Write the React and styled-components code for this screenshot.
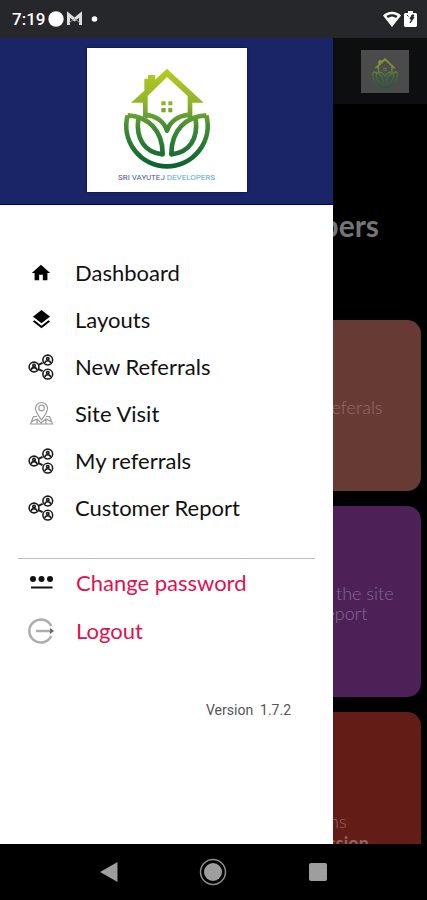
import styled, { createGlobalStyle } from "styled-components";
import { MdHome, MdLayers } from "react-icons/md";

const GlobalStyle = createGlobalStyle`
  * {
    box-sizing: border-box;
  }
  body {
    margin: 0;
    background: #000;
    font-family: Lato, "Open Sans", sans-serif;
  }
`;

const Screen = styled.div`
  display: flex;
  flex-direction: column;
  height: 100vh;
  overflow: hidden;
`;

// status bar
const StatusBar = styled.header`
  display: flex;
  flex: none;
  align-items: center;
  justify-content: space-between;
  height: 38px;
  padding: 0 10px 0 12px;
  background: #26272b;
  color: #fff;
`;
const StatusGroup = styled.div`
  display: flex;
  align-items: center;
  gap: 3px;
`;
const Clock = styled.time`
  font: 500 17px/20px Roboto, sans-serif;
`;

// page behind the drawer
const Stage = styled.div`
  position: relative;
  flex: 1;
  min-height: 0;
  overflow: hidden;
`;
const AppBar = styled.div`
  display: flex;
  justify-content: flex-end;
  align-items: center;
  height: 66px;
  padding: 0 18px;
  background: #0c0e0f;
`;
const Thumb = styled.div`
  display: flex;
  width: 48px;
  height: 43px;
  background: #4b4b4b;
  svg {
    opacity: 0.6;
  }
`;
const PageTitle = styled.h1`
  margin: 0;
  padding: 103px 48px 77px 0;
  color: #757575;
  font-size: 30px;
  line-height: 36px;
  font-weight: 700;
  text-align: right;
  white-space: nowrap;
`;
const Cards = styled.div`
  display: flex;
  flex-direction: column;
  align-items: flex-end;
  gap: 15px;
  padding-right: 6px;
`;
const Card = styled.section`
  display: flex;
  flex-direction: column;
  justify-content: center;
  width: 48%;
  height: ${(p) => p.$height}px;
  padding-top: 2px;
  border-radius: 14px;
  background: ${(p) => p.$color};
  color: ${(p) => p.$text};
  font-size: 18px;
  line-height: 20px;
  font-weight: 300;
  text-align: center;
  p {
    margin: 0;
  }
  strong {
    line-height: 24px;
    font-weight: 700;
  }
`;

// drawer
const Drawer = styled.aside`
  position: absolute;
  top: 0;
  bottom: 0;
  left: 0;
  width: 78%;
  background: #fff;
`;
const Brand = styled.div`
  display: flex;
  justify-content: center;
  padding: 10px 0 12px;
  background: #1a2568;
  border-bottom: 1px solid #00005a;
`;
const LogoBox = styled.div`
  width: 160px;
  height: 144px;
  background: #fff;
  box-shadow: 0 0 2px #00005a;
`;
const LogoName = styled.div`
  color: #4a5793;
  font: 400 8px/12px Roboto, sans-serif;
  text-align: center;
  span {
    color: #55aecb;
  }
`;
const Menu = styled.nav`
  padding-top: 44px;
`;
const MenuLink = styled.a`
  display: flex;
  align-items: center;
  gap: 21px;
  height: 47px;
  padding-left: 28px;
  color: #111;
  font-size: 22px;
  line-height: 26px;
  text-decoration: none;
`;
const IconSlot = styled.span`
  display: flex;
  justify-content: center;
  width: 26px;
`;
const Divider = styled.hr`
  margin: 27px 18px 0;
  border: 0;
  border-top: 1px solid #bdbdbd;
`;
const ActionButton = styled.button`
  display: flex;
  align-items: center;
  gap: 22px;
  width: 100%;
  height: 48px;
  padding: 0 0 0 28px;
  border: 0;
  background: none;
  color: #e0114f;
  font-family: inherit;
  font-size: 22px;
  line-height: 26px;
`;
const Version = styled.p`
  margin: 45px 42px 0;
  color: #555;
  font: 400 14px/20px Roboto, sans-serif;
  text-align: right;
  white-space: pre;
`;

// system navigation
const NavBar = styled.footer`
  display: grid;
  grid-template-columns: repeat(3, 1fr);
  flex: none;
  height: 56px;
  padding: 0 57px;
  background: #000;
`;
const NavButton = styled.button`
  display: flex;
  align-items: center;
  justify-content: center;
  padding: 0;
  border: 0;
  background: none;
`;

const Logo = ({ id, width, height }) => (
  <svg width={width} height={height} viewBox="20 24 480 363" fill="none">
    <defs>
      <linearGradient id={id} gradientUnits="userSpaceOnUse" x1="0" y1="86" x2="0" y2="384">
        <stop offset="0" stopColor="#b9cc1f" />
        <stop offset="0.35" stopColor="#8fb32b" />
        <stop offset="0.6" stopColor="#3f8a35" />
        <stop offset="1" stopColor="#07622f" />
      </linearGradient>
    </defs>
    <path
      fill={`url(#${id})`}
      d="M152 188 192 152V116h11v-11h21v14L260 86l110 102h-34v42l-14 6v-68l-62-57-58 57v68l-14-6v-42ZM243 184h13v12h-13ZM264 184h12v12h-12ZM243 204h13v13h-13ZM264 204h12v13h-12Z"
    />
    <g stroke={`url(#${id})`} strokeWidth="14" strokeLinejoin="round">
      <path d="M142 226A122 122 0 1 0 378 226" />
      <path d="M142 226C200 228 248 270 247 343C192 338 166 296 174 235" />
      <path d="M378 226C320 228 272 270 273 343C328 338 354 296 346 235" />
      <path d="M194 224c34 4 58 22 66 48 8-26 32-44 66-48" />
    </g>
  </svg>
);

const ShareIcon = () => (
  <svg width="26" height="26" viewBox="0 0 25 25" fill="none" stroke="#1c1c1c" strokeWidth="1.5">
    <path d="m10 10.500 4-2M10 14.500l4 2" strokeWidth="2" />
    {[
      [19, 5.8],
      [5.8, 12.5],
      [19, 19.4],
    ].map(([x, y]) => (
      <g key={y} transform={`translate(${x} ${y})`}>
        <circle r="4.7" />
        <circle cy="-1.3" r="1.2" />
        <path d="M-2.800 3c.3-3.200 5.300-3.200 5.600 0" />
      </g>
    ))}
  </svg>
);

const SiteIcon = () => (
  <svg width="25" height="25" viewBox="0 0 25 25" fill="none" stroke="#9c9c9c" strokeWidth="1.200">
    <path d="M12.500 19C9 14 6.500 11 6.500 7.500a6 6 0 0 1 12 0C18.500 11 16 14 12.500 19Z" />
    <circle cx="12.500" cy="7" r="2.800" />
    <path d="M8 15.500H4.500L1.500 23h22l-3-7.500H17M2 21l6-3 4 4 5-4 6 3M8 18v5M17 18v5" />
  </svg>
);

const PasswordIcon = () => (
  <svg width="24" height="16" viewBox="0 0 24 16" fill="#111">
    <circle cx="4" cy="4" r="3" />
    <circle cx="12.500" cy="4" r="3" />
    <circle cx="21" cy="4" r="3" />
    <path d="M2 11.500h21.500v2H2Z" />
  </svg>
);

const LogoutIcon = () => (
  <svg width="26" height="26" viewBox="0 0 26 26" fill="none" stroke="#adadad" strokeWidth="2.500">
    <path d="M23.200 8a11.500 11.500 0 1 0 0 10" />
    <path d="M8 13h15" />
    <path d="m22 10 4 3-4 3Z" fill="#666" stroke="none" />
  </svg>
);

const links = [
  { label: "Dashboard", icon: <MdHome size={22} color="#000" /> },
  { label: "Layouts", icon: <MdLayers size={23} color="#000" /> },
  { label: "New Referrals", icon: <ShareIcon /> },
  { label: "Site Visit", icon: <SiteIcon /> },
  { label: "My referrals", icon: <ShareIcon /> },
  { label: "Customer Report", icon: <ShareIcon /> },
];

const App = () => {
  return (
    <Screen>
      <GlobalStyle />
      <StatusBar>
        <StatusGroup>
          <Clock>7:19</Clock>
          <svg width="52" height="18" viewBox="0 0 52 18" fill="none">
            <circle cx="8" cy="9" r="7.700" fill="#fff" />
            <path d="M20.500 15V4.500l6 5 6-5V15" stroke="#ddd" strokeWidth="3" />
            <path d="m21 13 5.500-4.500L32 13" stroke="#999" />
            <circle cx="46.500" cy="9" r="2.800" fill="#fff" />
          </svg>
        </StatusGroup>
        <StatusGroup>
          <svg width="18" height="16" viewBox="0 0 18 16">
            <path d="M0 4.500C5-.5 13-.5 18 4.500L9 16Z" fill="#fff" />
            <path d="M3.500 5c3.500-2.500 7.500-2.500 11 0l-1.500 2c-2.500-2-5.500-2-8 0Z" fill="#26272b" />
          </svg>
          <svg width="13" height="16" viewBox="0 0 13 16">
            <path d="M1 2h3V0h5v2h3l1 1v12l-1 1H1l-1-1V3Z" fill="#fff" />
            <path d="m3 4 1.500 1.500M8 4 6 8h2l-2 4 4-5.500H8.500L10 4Z" fill="#26272b" stroke="#26272b" />
          </svg>
        </StatusGroup>
      </StatusBar>

      <Stage>
        <AppBar>
          <Thumb>
            <Logo id="thumbFill" width={48} height={40} />
          </Thumb>
        </AppBar>
        <PageTitle>Sri Vayutej Developers</PageTitle>
        <Cards>
          <Card $height={171} $color="#683a34" $text="#8f6f6a">
            <p>All your Referals</p>
          </Card>
          <Card $height={191} $color="#4d2158" $text="#866890">
            <p>
              Please visit the site
              <br />
              and a report
            </p>
          </Card>
          <Card $height={240} $color="#641c17" $text="#8f6663">
            <p>Tokens</p>
            <strong>Commission</strong>
          </Card>
        </Cards>

        <Drawer>
          <Brand>
            <LogoBox>
              <Logo id="logoFill" width={160} height={121} />
              <LogoName>
                SRI VAYUTEJ <span>DEVELOPERS</span>
              </LogoName>
            </LogoBox>
          </Brand>
          <Menu>
            {links.map((i) => (
              <MenuLink href="#" key={i.label}>
                <IconSlot>{i.icon}</IconSlot>
                {i.label}
              </MenuLink>
            ))}
          </Menu>
          <Divider />
          <ActionButton type="button">
            <IconSlot>
              <PasswordIcon />
            </IconSlot>
            Change password
          </ActionButton>
          <ActionButton type="button">
            <IconSlot>
              <LogoutIcon />
            </IconSlot>
            Logout
          </ActionButton>
          <Version>Version  1.7.2</Version>
        </Drawer>
      </Stage>

      <NavBar>
        <NavButton aria-label="Back">
          <svg width="18" height="20" viewBox="0 0 18 20" fill="#9e9e9e">
            <path d="M17.500 0v20L0 10Z" />
          </svg>
        </NavButton>
        <NavButton aria-label="Home">
          <svg width="28" height="28" viewBox="0 0 28 28">
            <circle cx="14" cy="14" r="12.500" fill="none" stroke="#8e8e8e" strokeWidth="1.500" />
            <circle cx="14" cy="14" r="9" fill="#9e9e9e" />
          </svg>
        </NavButton>
        <NavButton aria-label="Recent apps">
          <svg width="18" height="18" viewBox="0 0 18 18" fill="#9e9e9e">
            <rect width="18" height="18" rx="2" />
          </svg>
        </NavButton>
      </NavBar>
    </Screen>
  );
};

export default App;
